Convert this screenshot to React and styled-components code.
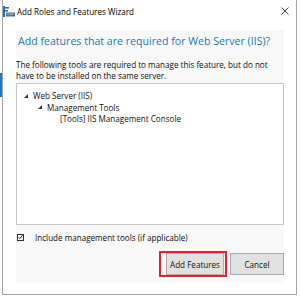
import React from 'react';
import styled, { createGlobalStyle } from 'styled-components';

const Global = createGlobalStyle`
  html, body { margin: 0; padding: 0; background: #fff; }
  body { font-family: "Open Sans", "Noto Sans", sans-serif; color: #111; }
`;

const Screen = styled.div`
  width: 300px;
  height: 298px;
  display: flex;
  overflow: hidden;
  background: #fff;
`;

const LeftEdge = styled.div`
  width: 2px;
  flex: none;
  padding-top: 73px;
`;

const BlueMark = styled.div`
  width: 2px;
  height: 24px;
  background: #1a78c8;
`;

const Window = styled.div`
  width: 295px;
  height: 295px;
  flex: none;
  box-sizing: border-box;
  border: 1px solid #a5a5a5;
  border-top: none;
  background: #fff;
  display: flex;
  flex-direction: column;
`;

const TitleBar = styled.div`
  height: 22px;
  display: flex;
  align-items: center;
  padding: 0 7px 0 0;
  flex: none;
`;

const AppIcon = styled.svg`
  width: 12px;
  height: 11px;
  margin-right: 2px;
  flex: none;
`;

const Title = styled.div`
  font-size: 8.1px;
  color: #000;
  flex: 1;
  white-space: nowrap;
`;

const CloseIcon = styled.svg`
  width: 8px;
  height: 8px;
  flex: none;
`;

const Panel = styled.div`
  margin: 8px 12px 11px 13px;
  flex: 1;
  background: #f8f8f8;
  display: flex;
  flex-direction: column;
`;

const Heading = styled.h1`
  margin: 4px 0 0 2px;
  font-size: 10.6px;
  font-weight: 400;
  line-height: 14px;
  color: #2479b6;
  white-space: nowrap;
`;

const Description = styled.p`
  margin: 11px 0 0 0;
  font-size: 8.1px;
  line-height: 11px;
  color: #111;
`;

const TreeBox = styled.div`
  margin-top: 2px;
  height: 142px;
  box-sizing: border-box;
  border: 1px solid #c6c6c6;
  background: #fff;
  padding: 6px 0 0 0;
`;

const TreeRow = styled.div`
  display: flex;
  align-items: center;
  height: 11.5px;
  padding-left: ${p => p.$indent}px;
  font-size: 8.1px;
  color: #111;
  white-space: nowrap;
`;

const Arrow = styled.svg`
  width: 4px;
  height: 4px;
  margin-right: 5px;
  flex: none;
`;

const CheckRow = styled.label`
  display: flex;
  align-items: center;
  margin-top: 6px;
  padding-left: 1px;
  font-size: 8.1px;
  color: #111;
  height: 12px;
`;

const Box = styled.span`
  width: 7px;
  height: 7px;
  box-sizing: border-box;
  border: 1px solid #333;
  background: #fff;
  margin-right: 11px;
  display: flex;
  align-items: center;
  justify-content: center;
  flex: none;
`;

const Buttons = styled.div`
  display: flex;
  justify-content: flex-end;
  align-items: center;
  gap: 3px;
  margin-top: 8px;
`;

const Highlight = styled.div`
  border: 2px solid #e3202f;
  padding: 0 1px 0 5px;
  display: flex;
`;

const Button = styled.button`
  width: ${p => p.$w}px;
  height: 22px;
  box-sizing: border-box;
  border: 1px solid #adadad;
  background: #e1e1e1;
  font-family: inherit;
  font-size: 8.1px;
  color: #111;
  padding: 0;
  margin: 0;
`;

export default function App() {
  return (
    <>
      <Global />
      <Screen>
        <LeftEdge>
          <BlueMark />
        </LeftEdge>
        <Window>
          <TitleBar>
            <AppIcon viewBox="0 0 12 11">
              <rect x="0" y="0" width="2" height="11" fill="#1b73c5" />
              <rect x="2" y="1" width="4" height="1.6" fill="#1b73c5" />
              <rect x="2" y="4" width="3" height="1.6" fill="#1b73c5" />
              <rect x="3" y="6.5" width="9" height="4" fill="#5b6f86" />
              <rect x="4" y="7.5" width="7" height="1" fill="#9fb3c8" />
            </AppIcon>
            <Title>Add Roles and Features Wizard</Title>
            <CloseIcon viewBox="0 0 8 8">
              <path d="M0.5 0.5 L7.5 7.5 M7.5 0.5 L0.5 7.5" stroke="#333" strokeWidth="0.9" />
            </CloseIcon>
          </TitleBar>
          <Panel>
            <Heading>Add features that are required for Web Server (IIS)?</Heading>
            <Description>
              The following tools are required to manage this feature, but do not
              <br />
              have to be installed on the same server.
            </Description>
            <TreeBox>
              <TreeRow $indent={7}>
                <Arrow viewBox="0 0 4 4"><path d="M4 0 L4 4 L0 4 Z" fill="#333" /></Arrow>
                Web Server (IIS)
              </TreeRow>
              <TreeRow $indent={21}>
                <Arrow viewBox="0 0 4 4"><path d="M4 0 L4 4 L0 4 Z" fill="#333" /></Arrow>
                Management Tools
              </TreeRow>
              <TreeRow $indent={43}>[Tools] IIS Management Console</TreeRow>
            </TreeBox>
            <CheckRow>
              <Box>
                <svg width="6" height="6" viewBox="0 0 6 6">
                  <path d="M0.6 3.2 L2.3 4.8 L5.4 0.8" stroke="#111" strokeWidth="1.1" fill="none" />
                </svg>
              </Box>
              Include management tools (if applicable)
            </CheckRow>
            <Buttons>
              <Highlight>
                <Button $w={58}>Add Features</Button>
              </Highlight>
              <Button $w={54}>Cancel</Button>
            </Buttons>
          </Panel>
        </Window>
      </Screen>
    </>
  );
}
